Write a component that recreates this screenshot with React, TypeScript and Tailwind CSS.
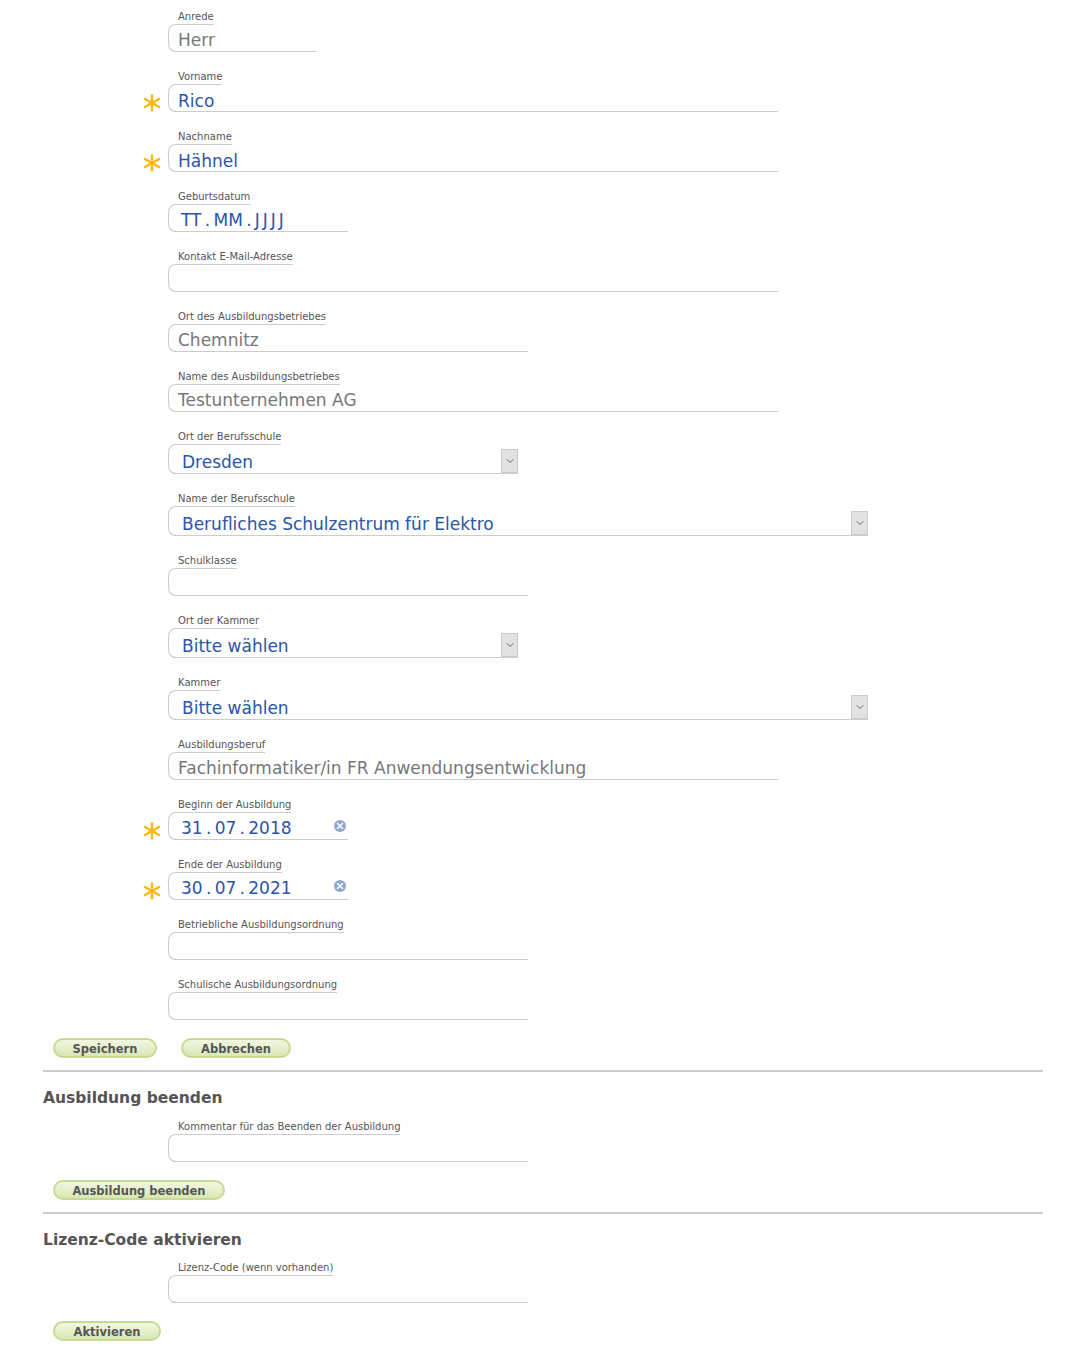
import { ChevronDown, X } from 'lucide-react';

function Star() {
  return (
    <svg width="18" height="18" viewBox="0 0 18 18" aria-hidden>
      <g stroke="#fdb913" strokeWidth="2.4">
        <line x1="9" y1="0.5" x2="9" y2="17.5" />
        <line x1="1" y1="4.5" x2="17" y2="13.5" />
        <line x1="1" y1="13.5" x2="17" y2="4.5" />
      </g>
    </svg>
  );
}

type FieldProps = {
  label: string;
  width: string;
  required?: boolean;
  children?: React.ReactNode;
};

function Field({ label, width, required, children }: FieldProps) {
  return (
    <div className="mb-2 flex items-end">
      <div className="flex w-[168px] shrink-0 justify-end pr-[7px]">{required ? <Star /> : null}</div>
      <div className={width}>
        <div className="flex h-[25px] items-end">
          <span className="ml-2 block h-[15px] border-b border-[#cccccc] pl-[2px] text-[10px] leading-[13px] text-[#555555]">
            {label}
          </span>
        </div>
        <div className="relative -mt-px">
          <span className="absolute left-0 top-0 h-2 w-2 rounded-tl-lg border-l border-t border-[#cccccc]" />
          {children}
        </div>
      </div>
    </div>
  );
}

function TextField({
  label,
  value = '',
  width,
  required,
  muted,
}: {
  label: string;
  value?: string;
  width: string;
  required?: boolean;
  muted?: boolean;
}) {
  return (
    <Field label={label} width={width} required={required}>
      <input
        value={value}
        readOnly
        className={`block h-7 w-full rounded-bl-lg border-b border-[#cccccc] bg-transparent pl-[10px] text-[17px] outline-none ${
          muted ? 'pt-[5px] text-[#777777]' : 'pt-[7px] text-[#2a55a8]'
        }`}
      />
      <span className="absolute bottom-0 left-0 top-2 w-2 rounded-bl-lg border-b border-l border-[#cccccc]" />
    </Field>
  );
}

function SelectField({ label, value, width }: { label: string; value: string; width: string }) {
  return (
    <Field label={label} width={width}>
      <div className="flex h-[30px] items-end justify-between rounded-bl-lg border-b border-[#cccccc] pl-[14px]">
        <span className="text-[17px] leading-[22px] text-[#2a55a8]">{value}</span>
        <span className="flex h-6 w-[17px] items-center justify-center border border-[#cccccc] bg-[#e2e2e2]">
          <ChevronDown className="h-3 w-3 text-[#666666]" aria-hidden />
        </span>
      </div>
      <span className="absolute bottom-0 left-0 top-2 w-2 rounded-bl-lg border-b border-l border-[#cccccc]" />
    </Field>
  );
}

function Dot() {
  return <span className="w-3 text-center">.</span>;
}

function DateField({
  label,
  parts,
  width,
  clearable,
}: {
  label: string;
  parts: string[];
  width: string;
  clearable?: boolean;
}) {
  return (
    <Field label={label} width={width} required={clearable}>
      <div className="flex h-7 items-center justify-between rounded-bl-lg border-b border-[#cccccc] pl-[13px] pr-[2px]">
        <span className="flex pt-[5px] text-[17px] leading-[22px] text-[#2a55a8]">
          <span>{parts[0]}</span>
          <Dot />
          <span>{parts[1]}</span>
          <Dot />
          <span className={parts[2] === 'JJJJ' ? 'tracking-[3px]' : ''}>{parts[2]}</span>
        </span>
        {clearable ? (
          <span className="mt-[1px] flex h-3 w-3 items-center justify-center rounded-full bg-[#8fa6d0]">
            <X className="h-2.5 w-2.5 text-white" strokeWidth={3.5} aria-hidden />
          </span>
        ) : null}
      </div>
      <span className="absolute bottom-0 left-0 top-2 w-2 rounded-bl-lg border-b border-l border-[#cccccc]" />
    </Field>
  );
}

function GreenButton({ label, width }: { label: string; width: string }) {
  return (
    <button
      type="button"
      className={`h-5 rounded-full border-2 border-[#c8da92] bg-gradient-to-b from-[#f2f7e2] to-[#d9e7b4] pt-[1px] text-[11.5px] font-bold leading-4 text-[#555555] ${width}`}
    >
      {label}
    </button>
  );
}

function SectionHead({ title }: { title: string }) {
  return (
    <div className="ml-[43px] w-[1000px] border-t-2 border-[#cccccc]">
      <h2 className="mt-[14px] text-[15.5px] font-bold leading-6 text-[#555555]">{title}</h2>
    </div>
  );
}

export default function App() {
  return (
    <div className="h-[1353px] w-[1069px] overflow-hidden bg-white font-['DejaVu_Sans',sans-serif]">
      <TextField label="Anrede" value="Herr" width="w-[148px]" muted />
      <TextField label="Vorname" value="Rico" width="w-[610px]" required />
      <TextField label="Nachname" value="Hähnel" width="w-[610px]" required />
      <DateField label="Geburtsdatum" parts={['TT', 'MM', 'JJJJ']} width="w-[180px]" />
      <TextField label="Kontakt E-Mail-Adresse" width="w-[610px]" />
      <TextField label="Ort des Ausbildungsbetriebes" value="Chemnitz" width="w-[360px]" muted />
      <TextField label="Name des Ausbildungsbetriebes" value="Testunternehmen AG" width="w-[610px]" muted />
      <SelectField label="Ort der Berufsschule" value="Dresden" width="w-[350px]" />
      <SelectField label="Name der Berufsschule" value="Berufliches Schulzentrum für Elektro" width="w-[700px]" />
      <TextField label="Schulklasse" width="w-[360px]" />
      <SelectField label="Ort der Kammer" value="Bitte wählen" width="w-[350px]" />
      <SelectField label="Kammer" value="Bitte wählen" width="w-[700px]" />
      <TextField label="Ausbildungsberuf" value="Fachinformatiker/in FR Anwendungsentwicklung" width="w-[610px]" muted />
      <DateField label="Beginn der Ausbildung" parts={['31', '07', '2018']} width="w-[180px]" clearable />
      <DateField label="Ende der Ausbildung" parts={['30', '07', '2021']} width="w-[180px]" clearable />
      <TextField label="Betriebliche Ausbildungsordnung" width="w-[360px]" />
      <TextField label="Schulische Ausbildungsordnung" width="w-[360px]" />

      <div className="ml-[53px] mt-[18px] flex gap-6">
        <GreenButton label="Speichern" width="w-[104px]" />
        <GreenButton label="Abbrechen" width="w-[110px]" />
      </div>

      <div className="mt-3">
        <SectionHead title="Ausbildung beenden" />
      </div>
      <TextField label="Kommentar für das Beenden der Ausbildung" width="w-[360px]" />
      <div className="ml-[53px] mt-4">
        <GreenButton label="Ausbildung beenden" width="w-[172px]" />
      </div>

      <div className="mt-[10px]">
        <SectionHead title="Lizenz-Code aktivieren" />
      </div>
      <div className="-mt-[1px]">
        <TextField label="Lizenz-Code (wenn vorhanden)" width="w-[360px]" />
      </div>
      <div className="ml-[53px] mt-4">
        <GreenButton label="Aktivieren" width="w-[108px]" />
      </div>
    </div>
  );
}
